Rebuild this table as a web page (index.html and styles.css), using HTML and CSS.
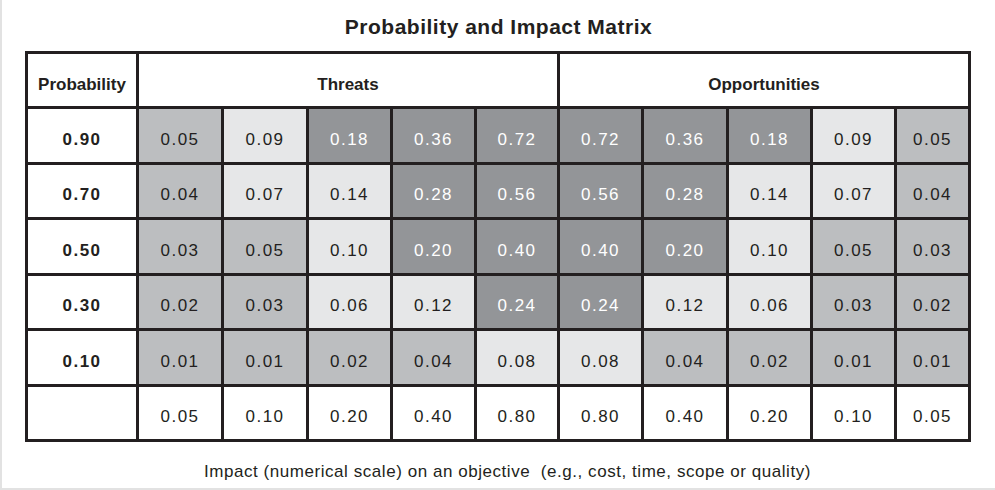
FILE: index.html
```html
<!DOCTYPE html>
<html>
<head>
<meta charset="utf-8">
<link rel="stylesheet" href="styles.css">
</head>
<body>
<div class="page">
  <h1 class="title">Probability and Impact Matrix</h1>
  <div class="matrix">
    <div class="cell head">Probability</div>
    <div class="cell head span-t">Threats</div>
    <div class="cell head span-o">Opportunities</div>

    <div class="cell prob">0.90</div>
    <div class="cell m">0.05</div><div class="cell l">0.09</div><div class="cell d">0.18</div><div class="cell d">0.36</div><div class="cell d">0.72</div>
    <div class="cell d">0.72</div><div class="cell d">0.36</div><div class="cell d">0.18</div><div class="cell l">0.09</div><div class="cell m">0.05</div>

    <div class="cell prob">0.70</div>
    <div class="cell m">0.04</div><div class="cell l">0.07</div><div class="cell l">0.14</div><div class="cell d">0.28</div><div class="cell d">0.56</div>
    <div class="cell d">0.56</div><div class="cell d">0.28</div><div class="cell l">0.14</div><div class="cell l">0.07</div><div class="cell m">0.04</div>

    <div class="cell prob">0.50</div>
    <div class="cell m">0.03</div><div class="cell m">0.05</div><div class="cell l">0.10</div><div class="cell d">0.20</div><div class="cell d">0.40</div>
    <div class="cell d">0.40</div><div class="cell d">0.20</div><div class="cell l">0.10</div><div class="cell m">0.05</div><div class="cell m">0.03</div>

    <div class="cell prob">0.30</div>
    <div class="cell m">0.02</div><div class="cell m">0.03</div><div class="cell l">0.06</div><div class="cell l">0.12</div><div class="cell d">0.24</div>
    <div class="cell d">0.24</div><div class="cell l">0.12</div><div class="cell l">0.06</div><div class="cell m">0.03</div><div class="cell m">0.02</div>

    <div class="cell prob">0.10</div>
    <div class="cell m">0.01</div><div class="cell m">0.01</div><div class="cell m">0.02</div><div class="cell m">0.04</div><div class="cell l">0.08</div>
    <div class="cell l">0.08</div><div class="cell m">0.04</div><div class="cell m">0.02</div><div class="cell m">0.01</div><div class="cell m">0.01</div>

    <div class="cell w"></div>
    <div class="cell w">0.05</div><div class="cell w">0.10</div><div class="cell w">0.20</div><div class="cell w">0.40</div><div class="cell w">0.80</div>
    <div class="cell w">0.80</div><div class="cell w">0.40</div><div class="cell w">0.20</div><div class="cell w">0.10</div><div class="cell w">0.05</div>
  </div>
  <p class="caption">Impact (numerical scale) on an objective&nbsp; (e.g., cost, time, scope or quality)</p>
</div>
</body>
</html>
```

FILE: styles.css
```css
html, body {
  margin: 0;
  padding: 0;
  background: #ffffff;
}

.page {
  box-sizing: border-box;
  width: 995px;
  height: 490px;
  border-left: 2px solid #e2e2e2;
  border-bottom: 2px solid #e2e2e2;
  font-family: "Liberation Sans", Arial, sans-serif;
  color: #231f20;
  display: flex;
  flex-direction: column;
}

.title {
  margin: 0 0 12px 0;
  padding-top: 15px;
  height: 24px;
  line-height: 24px;
  font-size: 21px;
  font-weight: bold;
  letter-spacing: 0.5px;
  text-align: center;
}

.matrix {
  margin-left: 23px;
  display: grid;
  grid-template-columns: 108px 82px 82px 81px 81px 80px 81px 82px 81px 81px 71px;
  grid-template-rows: 52px 53px 52px 53px 52px 53px 52px;
  gap: 3px;
  background: #231f20;
  border: 3px solid #231f20;
  width: max-content;
}

.cell {
  box-sizing: border-box;
  display: flex;
  align-items: center;
  justify-content: center;
  padding-top: 8px;
  font-size: 17px;
  letter-spacing: 1.5px;
  background: #ffffff;
}

.head {
  font-weight: bold;
  letter-spacing: 0;
  padding-top: 9px;
}

.span-t {
  grid-column: 2 / 7;
}

.span-o {
  grid-column: 7 / 12;
}

.prob {
  font-weight: bold;
  letter-spacing: 1.5px;
}

.d {
  background: #939598;
  color: #ffffff;
}

.m {
  background: #bcbec0;
}

.l {
  background: #e6e7e8;
}

.w {
  background: #ffffff;
}

.caption {
  margin: 20px 0 0 0;
  line-height: 20px;
  font-size: 17px;
  letter-spacing: 0.55px;
  text-align: center;
  padding-left: 18px;
}
```
